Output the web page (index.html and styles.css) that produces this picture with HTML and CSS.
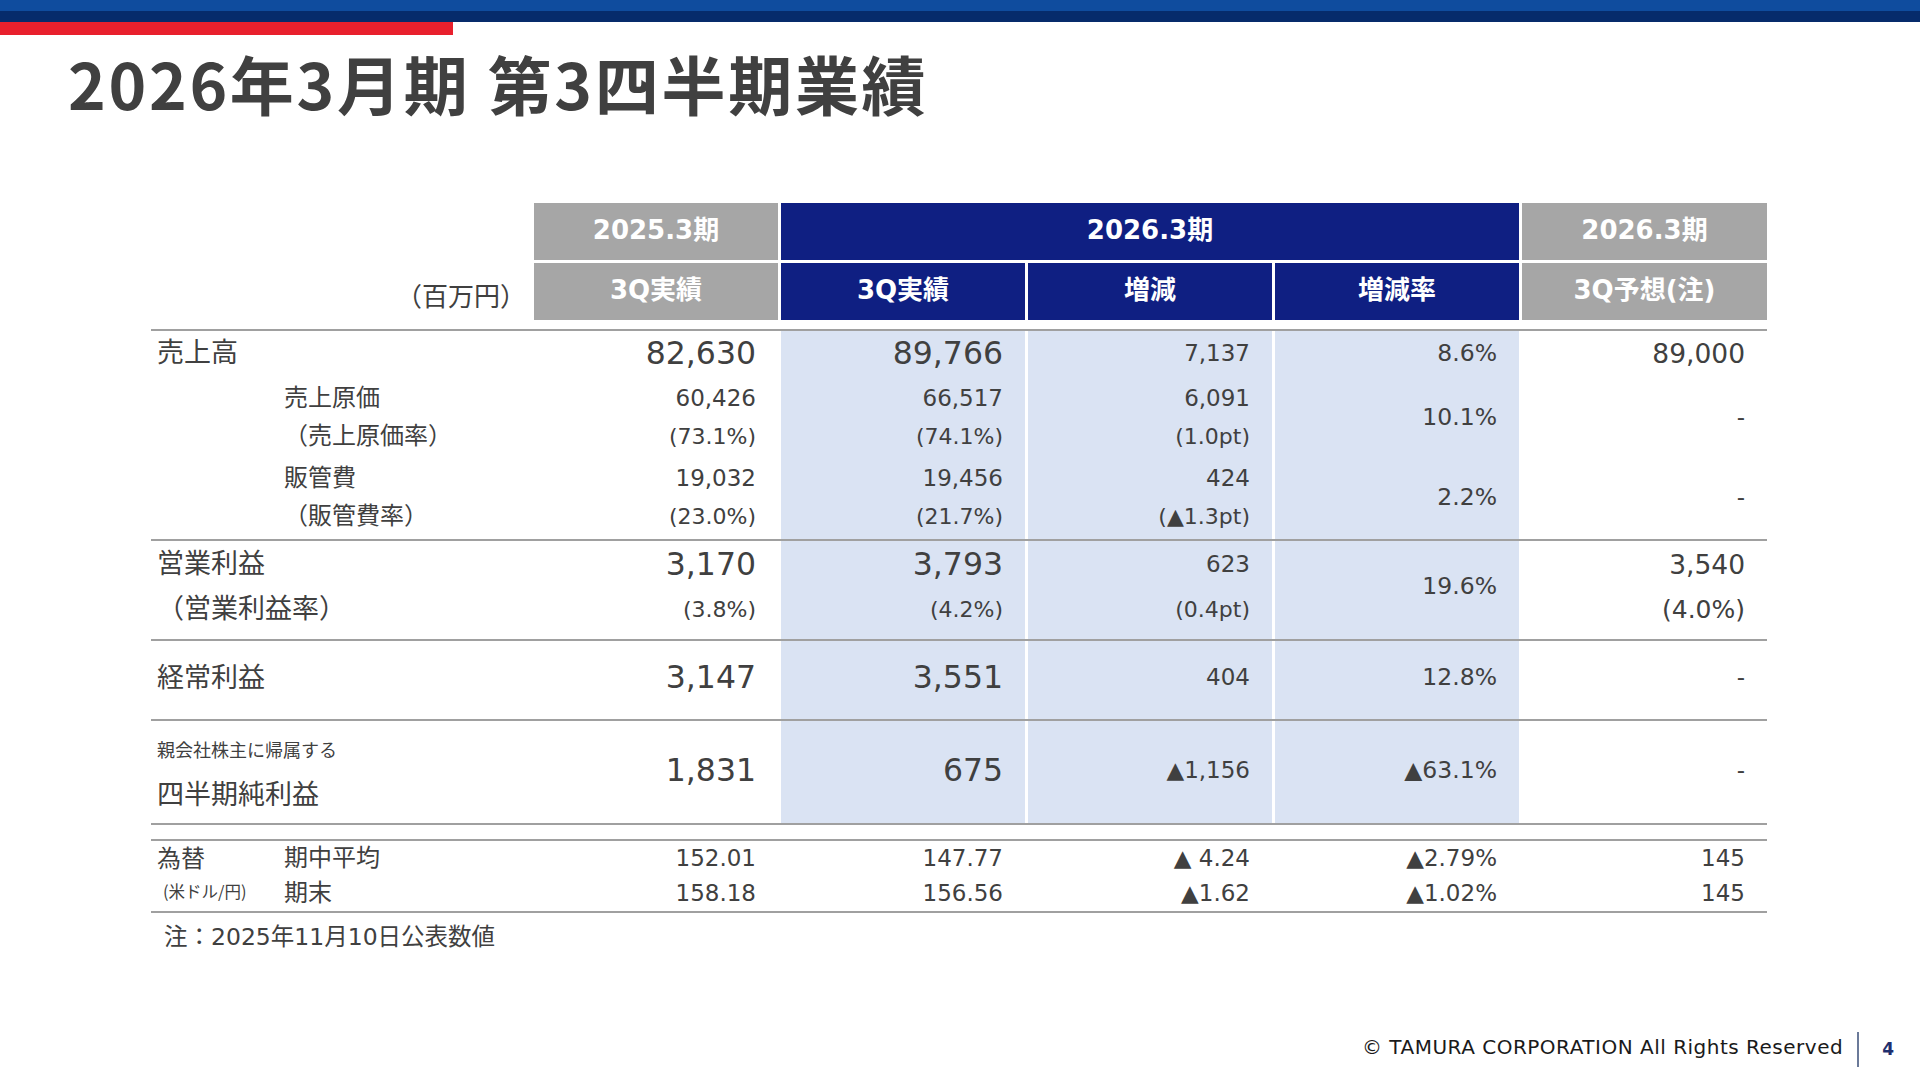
FILE: index.html
```html
<!DOCTYPE html>
<html lang="ja">
<head>
<meta charset="utf-8">
<title>2026年3月期 第3四半期業績</title>
<link rel="stylesheet" href="styles.css">
</head>
<body>
<div class="slide">
  <div class="topbar">
    <div class="bar-blue"></div>
    <div class="bar-navy"></div>
    <div class="bar-red"></div>
  </div>
  <h1 class="title">2026年3月期 第3四半期業績</h1>

  <div class="fin">
    <div class="hrow">
      <div class="unit-empty"></div>
      <div class="hc gray">2025.3期</div>
      <div class="hc navy span3">2026.3期</div>
      <div class="hc gray">2026.3期</div>
    </div>
    <div class="hrow">
      <div class="unit">（百万円）</div>
      <div class="hc gray">3Q実績</div>
      <div class="hc navy">3Q実績</div>
      <div class="hc navy">増減</div>
      <div class="hc navy">増減率</div>
      <div class="hc gray">3Q予想(注)</div>
    </div>

    <div class="tbody">
      <!-- 売上高 block -->
      <div class="blk blk-a">
        <div class="lab">
          <div class="ln-main major">売上高</div>
          <div class="grp"><div class="ln sub">売上原価</div><div class="ln sub">（売上原価率）</div></div>
          <div class="grp"><div class="ln sub">販管費</div><div class="ln sub">（販管費率）</div></div>
        </div>
        <div class="c">
          <div class="ln-main big">82,630</div>
          <div class="grp"><div class="ln sm">60,426</div><div class="ln pc">(73.1%)</div></div>
          <div class="grp"><div class="ln sm">19,032</div><div class="ln pc">(23.0%)</div></div>
        </div>
        <div class="c blue">
          <div class="ln-main big">89,766</div>
          <div class="grp"><div class="ln sm">66,517</div><div class="ln pc">(74.1%)</div></div>
          <div class="grp"><div class="ln sm">19,456</div><div class="ln pc">(21.7%)</div></div>
        </div>
        <div class="c blue">
          <div class="ln-main sm">7,137</div>
          <div class="grp"><div class="ln sm">6,091</div><div class="ln pc">(1.0pt)</div></div>
          <div class="grp"><div class="ln sm">424</div><div class="ln pc">(▲1.3pt)</div></div>
        </div>
        <div class="c blue">
          <div class="ln-main rt">8.6%</div>
          <div class="grp"><div class="ln-one rt">10.1%</div></div>
          <div class="grp"><div class="ln-one rt">2.2%</div></div>
        </div>
        <div class="c">
          <div class="ln-main fc">89,000</div>
          <div class="grp"><div class="ln-one sm">-</div></div>
          <div class="grp"><div class="ln-one sm">-</div></div>
        </div>
      </div>

      <!-- 営業利益 block -->
      <div class="blk blk-b">
        <div class="lab">
          <div class="ln-b1 major">営業利益</div>
          <div class="ln-b2 major">（営業利益率）</div>
        </div>
        <div class="c">
          <div class="ln-b1 big">3,170</div>
          <div class="ln-b2 pc">(3.8%)</div>
        </div>
        <div class="c blue">
          <div class="ln-b1 big">3,793</div>
          <div class="ln-b2 pc">(4.2%)</div>
        </div>
        <div class="c blue">
          <div class="ln-b1 sm">623</div>
          <div class="ln-b2 pc">(0.4pt)</div>
        </div>
        <div class="c blue">
          <div class="ln-b12 rt">19.6%</div>
        </div>
        <div class="c">
          <div class="ln-b1 fc">3,540</div>
          <div class="ln-b2 fcp">(4.0%)</div>
        </div>
      </div>

      <!-- 経常利益 block -->
      <div class="blk blk-c">
        <div class="lab mid"><div class="major">経常利益</div></div>
        <div class="c mid"><div class="big">3,147</div></div>
        <div class="c blue mid"><div class="big">3,551</div></div>
        <div class="c blue mid"><div class="sm">404</div></div>
        <div class="c blue mid"><div class="rt">12.8%</div></div>
        <div class="c mid"><div class="sm">-</div></div>
      </div>

      <!-- 純利益 block -->
      <div class="blk blk-d">
        <div class="lab">
          <div class="ln-d1 tiny">親会社株主に帰属する</div>
          <div class="ln-d2 major">四半期純利益</div>
        </div>
        <div class="c mid"><div class="big">1,831</div></div>
        <div class="c blue mid"><div class="big">675</div></div>
        <div class="c blue mid"><div class="sm">▲1,156</div></div>
        <div class="c blue mid"><div class="rt">▲63.1%</div></div>
        <div class="c mid"><div class="sm">-</div></div>
      </div>

      <div class="spacer"></div>

      <!-- 為替 block -->
      <div class="blk blk-e">
        <div class="lab fx">
          <div class="fx1 fxa">為替</div>
          <div class="fx1 sub-e">期中平均</div>
          <div class="fx2 fxb">(米ドル/円)</div>
          <div class="fx2 sub-e">期末</div>
        </div>
        <div class="c">
          <div class="ln-e1 sm">152.01</div>
          <div class="ln-e2 sm">158.18</div>
        </div>
        <div class="c">
          <div class="ln-e1 sm">147.77</div>
          <div class="ln-e2 sm">156.56</div>
        </div>
        <div class="c">
          <div class="ln-e1 sm">▲ 4.24</div>
          <div class="ln-e2 sm">▲1.62</div>
        </div>
        <div class="c">
          <div class="ln-e1 sm">▲2.79%</div>
          <div class="ln-e2 sm">▲1.02%</div>
        </div>
        <div class="c">
          <div class="ln-e1 sm">145</div>
          <div class="ln-e2 sm">145</div>
        </div>
      </div>
    </div>

    <p class="note">注：2025年11月10日公表数値</p>
  </div>

  <footer class="footer">
    <span class="copy">© TAMURA CORPORATION All Rights Reserved</span>
    <span class="vline"></span>
    <span class="page">4</span>
  </footer>
</div>
</body>
</html>
```

FILE: styles.css
```css
html, body {
  margin: 0;
  padding: 0;
  background: #ffffff;
}

.slide {
  width: 1920px;
  height: 1080px;
  display: flex;
  flex-direction: column;
  overflow: hidden;
  color: #404040;
  font-family: "DejaVu Sans", "Noto Sans CJK JP", sans-serif;
}

/* top decoration */
.topbar {
  display: flex;
  flex-direction: column;
}
.bar-blue {
  height: 11px;
  background: #0f4c9e;
}
.bar-navy {
  height: 11px;
  background: #062b6b;
}
.bar-red {
  height: 13px;
  width: 453px;
  background: #e8202d;
}

.title {
  margin: 15px 0 0 0;
  padding-left: 68px;
  font-family: "Noto Sans CJK JP", sans-serif;
  font-weight: 700;
  font-size: 64px;
  line-height: 64px;
  letter-spacing: 2.7px;
  color: #404040;
  white-space: nowrap;
}

/* table */
.fin {
  margin: 89px 0 0 151px;
  width: 1616px;
}

.hrow,
.blk {
  display: grid;
  grid-template-columns: 380px 244px 244px 244px 244px 245px;
  column-gap: 3px;
}

.hrow {
  height: 57px;
}
.hrow + .hrow {
  margin-top: 3px;
}

.hc {
  display: flex;
  align-items: center;
  justify-content: center;
  box-sizing: border-box;
  padding-bottom: 8px;
  color: #ffffff;
  font-weight: 700;
  font-size: 26px;
}
.hc.gray {
  background: #a6a6a6;
}
.hc.navy {
  background: #0f1f82;
}
.hc.span3 {
  grid-column: span 3;
}

.unit {
  display: flex;
  align-items: center;
  justify-content: flex-end;
  padding: 5px 5px 0 0;
  font-family: "Noto Sans CJK JP", sans-serif;
  font-size: 26px;
}

.tbody {
  margin-top: 9px;
  border-top: 2px solid #a0a0a0;
}

.blk {
  border-bottom: 2px solid #a0a0a0;
}
.blk-a { height: 208px; }
.blk-b { height: 98px; }
.blk-c { height: 78px; }
.blk-d { height: 102px; }
.blk-e {
  height: 70px;
  border-top: 2px solid #a0a0a0;
}
.spacer {
  height: 14px;
}

/* label column */
.lab {
  display: flex;
  flex-direction: column;
  font-family: "Noto Sans CJK JP", sans-serif;
  padding-left: 6px;
}
.lab .grp {
  padding-left: 127px;
}
.lab .ln-main,
.lab .ln,
.lab .ln-b1,
.lab .ln-b2,
.lab .ln-d1,
.lab .ln-d2 {
  box-sizing: border-box;
  padding-bottom: 5px;
}
.lab .ln-d2 {
  padding-bottom: 9px;
}

/* data columns */
.c {
  display: flex;
  flex-direction: column;
  align-items: flex-end;
  padding-right: 22px;
}
.c.blue {
  background: #dae3f3;
}
.mid {
  justify-content: center;
}
.blk-c .mid {
  padding-bottom: 6px;
}
.blk-d .mid {
  padding-bottom: 4px;
}
.lab.mid {
  justify-content: center;
  padding-bottom: 10px;
}

.ln-main,
.ln,
.ln-one,
.ln-b1,
.ln-b2,
.ln-b12,
.ln-d1,
.ln-d2,
.ln-e1,
.ln-e2 {
  display: flex;
  align-items: center;
  white-space: nowrap;
}

.ln-main { height: 44px; }
.grp {
  margin-top: 4px;
  display: flex;
  flex-direction: column;
}
.c .grp {
  align-items: flex-end;
}
.ln { height: 38px; }
.ln-one { height: 76px; }

.ln-b1 { height: 46px; }
.ln-b2 { height: 44px; }
.ln-b12 { height: 90px; }

.ln-d1 {
  height: 24px;
  margin-top: 18px;
}
.ln-d2 {
  height: 36px;
  margin-top: 16px;
}

.ln-e1 { height: 33px; }
.ln-e2 { height: 37px; }

/* text sizes */
.major {
  font-size: 27px;
}
.sub {
  font-size: 24px;
}
.tiny {
  font-size: 18px;
}
.big {
  font-size: 31.5px;
}
.sm {
  font-size: 23px;
}
.pc {
  font-size: 22px;
}
.rt {
  font-size: 23.5px;
}
.fc {
  font-size: 26.5px;
}
.fcp {
  font-size: 25px;
}

/* exchange rate labels */
.lab.fx {
  display: grid;
  grid-template-columns: 127px 1fr;
  grid-template-rows: 33px 37px;
  padding-left: 0;
}
.fx1,
.fx2 {
  display: flex;
  align-items: center;
  white-space: nowrap;
  box-sizing: border-box;
}
.fxa {
  padding-left: 6px;
  font-size: 24px;
  padding-bottom: 2px;
}
.fxb {
  padding-left: 12px;
  font-size: 16.5px;
  padding-bottom: 3px;
}
.sub-e {
  padding-left: 6px;
  font-size: 24px;
  padding-bottom: 5px;
}

.note {
  margin: 6px 0 0 13px;
  font-family: "DejaVu Sans", "Noto Sans CJK JP", sans-serif;
  font-size: 23.5px;
  line-height: 36px;
  white-space: nowrap;
}

/* footer */
.footer {
  margin-top: auto;
  display: flex;
  justify-content: flex-end;
  align-items: center;
  padding: 0 26px 13px 0;
}
.copy {
  font-family: "DejaVu Sans", sans-serif;
  font-size: 20px;
  letter-spacing: 0.5px;
  color: #1a1a1a;
  padding-bottom: 5px;
}
.vline {
  width: 2px;
  height: 35px;
  background: #6b7a99;
  margin: 0 23px 0 14px;
}
.page {
  font-family: "DejaVu Sans", sans-serif;
  font-weight: 700;
  font-size: 17px;
  color: #1f2f6e;
  padding-bottom: 2px;
}
```
